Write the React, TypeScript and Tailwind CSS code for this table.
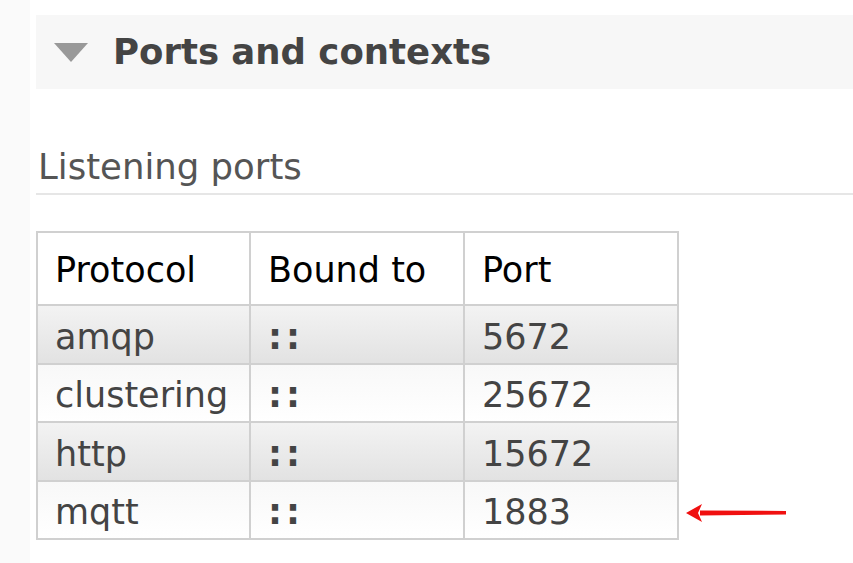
const rows = [
  { protocol: "amqp", bound: "::", port: "5672" },
  { protocol: "clustering", bound: "::", port: "25672" },
  { protocol: "http", bound: "::", port: "15672" },
  { protocol: "mqtt", bound: "::", port: "1883" },
];

const font = "font-['DejaVu_Sans',Verdana,sans-serif]";

export default function App() {
  return (
    <div className={`flex w-[853px] h-[563px] overflow-hidden bg-white ${font}`}>
      {/* left gutter */}
      <div className="w-[30px] shrink-0 bg-[#fafafa]" />

      <div className="flex-1 pl-[6px] pt-[15px]">
        {/* section header */}
        <div className="flex h-[74px] items-center bg-[#f7f7f7]">
          <svg className="ml-[18px]" width="34" height="19" viewBox="0 0 34 19">
            <path d="M0 0 H34 L17 19 Z" fill="#999" />
          </svg>
          <h2 className="ml-[25px] text-[35.5px] font-bold leading-none text-[#444]">
            Ports and contexts
          </h2>
        </div>

        {/* sub header */}
        <h3 className="mt-[58px] pl-[2px] pb-[6px] text-[35.5px] leading-[40px] text-[#555] border-b-2 border-[#e6e6e6]">
          Listening ports
        </h3>

        <div className="mt-[36px] flex items-end">
          <table className="border-collapse border-2 border-[#d0d0d0] text-[35px] leading-none">
            <thead>
              <tr className="h-[73px] bg-white text-black">
                <th className="w-[213px] border-2 border-[#d0d0d0] px-[17px] pt-[3px] text-left font-normal">Protocol</th>
                <th className="w-[214px] border-2 border-[#d0d0d0] px-[17px] pt-[3px] text-left font-normal">Bound to</th>
                <th className="w-[214px] border-2 border-[#d0d0d0] px-[17px] pt-[3px] text-left font-normal">Port</th>
              </tr>
            </thead>
            <tbody>
              {rows.map((r, i) => (
                <tr
                  key={r.protocol}
                  className={`h-[58.5px] text-[#444] ${
                    i % 2 === 0
                      ? "bg-gradient-to-b from-[#f3f3f3] to-[#e2e2e2]"
                      : "bg-gradient-to-b from-[#f8f8f8] to-white"
                  }`}
                >
                  <td className="border-2 border-[#d0d0d0] px-[17px] pt-[6px]">{r.protocol}</td>
                  <td className="border-2 border-[#d0d0d0] px-[17px] pt-[6px] font-bold tracking-[4px]">{r.bound}</td>
                  <td className="border-2 border-[#d0d0d0] px-[17px] pt-[6px]">{r.port}</td>
                </tr>
              ))}
            </tbody>
          </table>

          {/* annotation arrow */}
          <svg className="ml-[7px] mb-[17px]" width="102" height="20" viewBox="0 0 102 20">
            <path d="M14 7.5 L100 8 L100 11.5 L14 12.5 Z" fill="#f01010" />
            <path d="M0 10 L16 1 L12 10 L16 19 Z" fill="#f01010" />
          </svg>
        </div>
      </div>
    </div>
  );
}
